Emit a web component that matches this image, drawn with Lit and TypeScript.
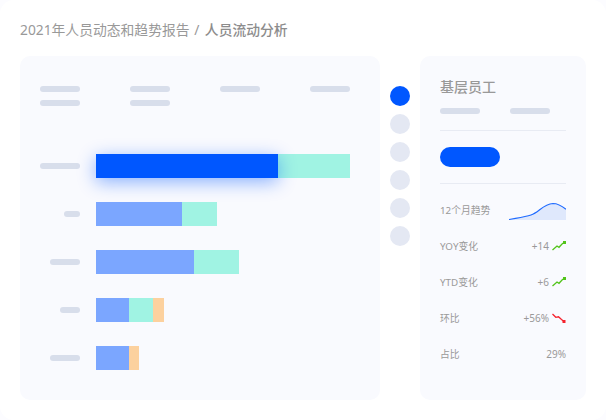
import { LitElement, html, css, svg } from "lit";
import { customElement } from "lit/decorators.js";

const rows = [
  { label: 40, segs: [["hi", 182], ["teal", 72]] },
  { label: 16, segs: [["blue", 86], ["teal", 35]] },
  { label: 30, segs: [["blue", 98], ["teal", 45]] },
  { label: 20, segs: [["blue", 33], ["teal", 24], ["orange", 11]] },
  { label: 30, segs: [["blue", 33], ["orange", 10]] },
];

const up = svg`<svg class="ic" width="14" height="12" viewBox="0 0 14 12"><path d="M0.5 10 L5 6 L7 7.300 L10.500 3.500 L12.500 2.500" fill="none" stroke="#52c41a" stroke-width="1.300"/><rect x="11" y="1" width="3" height="3" fill="#52c41a"/></svg>`;
const down = svg`<svg class="ic" width="14" height="12" viewBox="0 0 14 12"><path d="M0.500 2 L3.800 5.300 L6.500 4.800 L9.500 7.500 L12 9.500" fill="none" stroke="#f5222d" stroke-width="1.300"/><rect x="10.500" y="8" width="3" height="3" fill="#f5222d"/></svg>`;

@customElement("app-root")
export class AppRoot extends LitElement {
  static styles = css`
    :host { display: block; width: 606px; height: 420px; background: #fcfcff; overflow: hidden;
      font-family: "Noto Sans", "Noto Sans CJK SC", sans-serif; }
    .page { padding: 20px; display: flex; flex-direction: column; box-sizing: border-box; height: 420px; background: #fff; border-radius: 14px; }
    .crumb { font-size: 13.8px; line-height: 20px; color: #999; height: 20px; margin-bottom: 16px; white-space: pre; }
    .sep { margin: 0 2px 0 1px; }
    .crumb b { font-weight: 500; color: #8c8c8c; }
    .main { display: flex; height: 344px; }
    .panel { background: #f9fafe; border-radius: 10px; box-sizing: border-box; }
    .left { width: 360px; padding: 30px 20px 0; }
    .heads { display: grid; grid-template-columns: repeat(4, 90px); row-gap: 8px; height: 68px; align-content: start; }
    .sk { display: block; height: 6px; border-radius: 3px; background: #d8deeb; }
    .w40 { width: 40px; }
    .rows { display: flex; flex-direction: column; gap: 24px; }
    .row { display: flex; align-items: center; height: 24px; }
    .lab { width: 40px; display: flex; justify-content: flex-end; margin-right: 16px; }
    .bar { display: flex; height: 24px; }
    .seg { height: 24px; }
    .hi { background: #0057ff; box-shadow: 0 4px 18px rgba(0, 87, 255, 0.45); position: relative; z-index: 1; }
    .blue { background: #7ba6ff; }
    .teal { background: #a0f3e3; }
    .orange { background: #fcd19e; }
    .dots { width: 40px; padding-top: 30px; display: flex; flex-direction: column; align-items: center; gap: 8px; }
    .dot { width: 20px; height: 20px; border-radius: 50%; background: #e4e8f3; }
    .dot.on { background: #0057ff; }
    .right { width: 166px; padding: 20px 20px 0; }
    .title { font-size: 14px; line-height: 22px; font-weight: 500; color: #999; }
    .sks { display: flex; gap: 30px; margin-top: 10px; padding-bottom: 16px; border-bottom: 1px solid #e8ebf3; }
    .pillwrap { border-bottom: 1px solid #e8ebf3; height: 53px; box-sizing: border-box; padding-top: 16px; }
    .pill { width: 60px; height: 20px; border-radius: 10px; background: #0057ff; }
    .stats { display: flex; flex-direction: column; padding-top: 8px; }
    .stat { height: 36px; display: flex; align-items: center; justify-content: space-between; font-size: 9.8px; color: #999; }
    .val { display: flex; align-items: center; gap: 3px; font-size: 10px; }
    .ic { display: block; }
  `;

  render() {
    return html`<div class="page">
      <div class="crumb">2021年人员动态和趋势报告<span class="sep"> / </span><b>人员流动分析</b></div>
      <div class="main">
        <div class="panel left">
          <div class="heads">
            <i class="sk w40"></i><i class="sk w40"></i><i class="sk w40"></i><i class="sk w40"></i>
            <i class="sk w40"></i><i class="sk w40"></i>
          </div>
          <div class="rows">
            ${rows.map(r => html`<div class="row">
              <div class="lab"><i class="sk" style="width:${r.label}px"></i></div>
              <div class="bar">${r.segs.map(([c, w]) => html`<div class="seg ${c}" style="width:${w}px"></div>`)}</div>
            </div>`)}
          </div>
        </div>
        <div class="dots">
          <div class="dot on"></div><div class="dot"></div><div class="dot"></div><div class="dot"></div><div class="dot"></div><div class="dot"></div>
        </div>
        <div class="panel right">
          <div class="title">基层员工</div>
          <div class="sks"><i class="sk w40"></i><i class="sk w40"></i></div>
          <div class="pillwrap"><div class="pill"></div></div>
          <div class="stats">
            <div class="stat"><span>12个月趋势</span>
              <svg class="ic" width="57" height="20" viewBox="0 0 57 20"><path d="M0 19.500 C8 18 16 17 22 15 C30 12.500 34 4 44 3.500 C49 3.500 53 6 57 9.300 L57 20 L0 20 Z" fill="#dfe8fc"/><path d="M0 19.500 C8 18 16 17 22 15 C30 12.500 34 4 44 3.500 C49 3.500 53 6 57 9.300" fill="none" stroke="#1f6bff" stroke-width="1.200"/></svg>
            </div>
            <div class="stat"><span>YOY变化</span><span class="val">+14 ${up}</span></div>
            <div class="stat"><span>YTD变化</span><span class="val">+6 ${up}</span></div>
            <div class="stat"><span>环比</span><span class="val">+56% ${down}</span></div>
            <div class="stat"><span>占比</span><span class="val">29%</span></div>
          </div>
        </div>
      </div>
    </div>`;
  }
}
